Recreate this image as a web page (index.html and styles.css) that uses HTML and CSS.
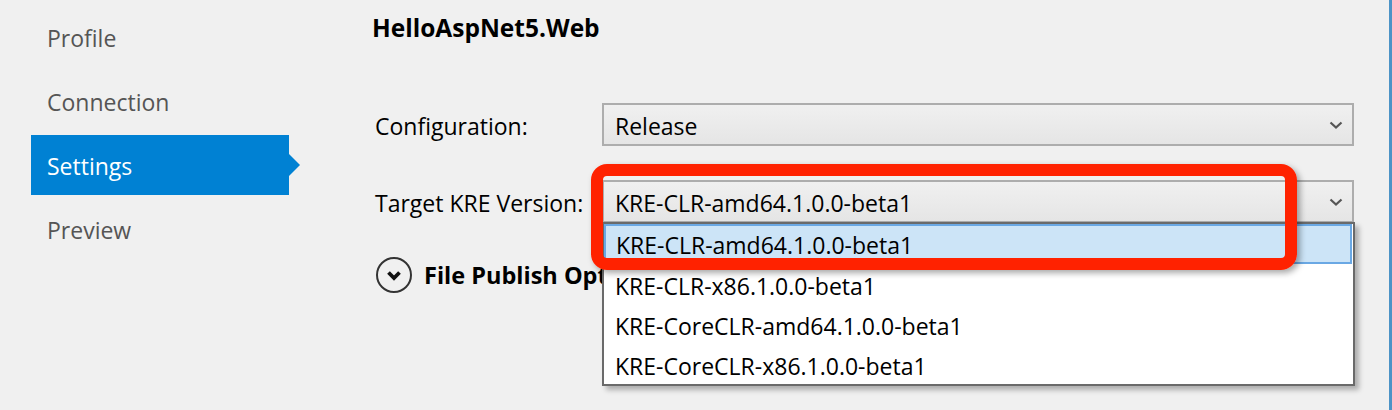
FILE: index.html
```html
<!DOCTYPE html>
<html>
<head>
<meta charset="utf-8">
<link rel="stylesheet" href="styles.css">
</head>
<body>
<div class="page">
  <nav class="sidebar">
    <div class="nav-item">Profile</div>
    <div class="nav-item">Connection</div>
    <div class="nav-item active">Settings</div>
    <div class="nav-item">Preview</div>
  </nav>
  <main class="main">
    <h1 class="title">HelloAspNet5.Web</h1>
    <div class="form">
      <label class="label">Configuration:</label>
      <div class="combo">
        <span>Release</span>
        <svg class="chev" width="14" height="8" viewBox="0 0 14 8"><polyline points="1.5,1.5 7,6.5 12.5,1.5" fill="none" stroke="#555" stroke-width="2.2"/></svg>
      </div>
      <label class="label">Target KRE Version:</label>
      <div class="combo-wrap">
        <div class="combo">
          <span>KRE-CLR-amd64.1.0.0-beta1</span>
          <svg class="chev" width="14" height="8" viewBox="0 0 14 8"><polyline points="1.5,1.5 7,6.5 12.5,1.5" fill="none" stroke="#555" stroke-width="2.2"/></svg>
        </div>
        <ul class="dropdown">
          <li class="opt selected">KRE-CLR-amd64.1.0.0-beta1</li>
          <li class="opt">KRE-CLR-x86.1.0.0-beta1</li>
          <li class="opt">KRE-CoreCLR-amd64.1.0.0-beta1</li>
          <li class="opt">KRE-CoreCLR-x86.1.0.0-beta1</li>
        </ul>
        <div class="callout"></div>
      </div>
    </div>
    <div class="expander">
      <svg class="exp-icon" width="38" height="38" viewBox="0 0 38 38"><circle cx="19" cy="19" r="17" fill="none" stroke="#333" stroke-width="2"/><polyline points="13.5,16.5 19,22 24.5,16.5" fill="none" stroke="#111" stroke-width="3.8"/></svg>
      <span class="exp-text">File Publish Options</span>
    </div>
  </main>
</div>
</body>
</html>
```

FILE: styles.css
```css
* { box-sizing: border-box; }
html, body { margin: 0; padding: 0; }
body {
  background: #f0f0f0;
  font-family: "Open Sans", "Noto Sans", sans-serif;
  width: 1392px;
  height: 410px;
  overflow: hidden;
}
.page {
  display: flex;
  width: 1392px;
  height: 410px;
  border-right: 3px solid #4c93c6;
}
.sidebar {
  width: 341px;
  padding-top: 7px;
  padding-left: 31px;
  display: flex;
  flex-direction: column;
  gap: 4px;
}
.nav-item {
  position: relative;
  width: 258px;
  height: 60px;
  display: flex;
  align-items: center;
  padding-left: 16px;
  padding-top: 2px;
  font-size: 23px;
  color: #555;
}
.nav-item.active {
  background: #0081d3;
  color: #fff;
}
.nav-item.active::after {
  content: "";
  position: absolute;
  right: -11px;
  top: 19px;
  border-left: 11px solid #0081d3;
  border-top: 11px solid transparent;
  border-bottom: 11px solid transparent;
}
.main {
  flex: 1;
  padding-left: 31px;
}
.title {
  margin: 0;
  padding-top: 11px;
  font-size: 24.5px;
  font-weight: 700;
  color: #000;
  line-height: 34px;
}
.form {
  margin-top: 58px;
  display: grid;
  grid-template-columns: 227px 752px;
  row-gap: 34px;
  padding-left: 3px;
}
.label {
  display: flex;
  align-items: center;
  padding-top: 2px;
  font-size: 23px;
  color: #000;
}
.combo-wrap { position: relative; }
.combo {
  height: 43px;
  border: 2px solid #adadad;
  background: linear-gradient(#f0f0f0, #e5e5e5);
  display: flex;
  align-items: center;
  justify-content: space-between;
  padding: 2px 9px 0 11px;
  font-size: 23px;
  color: #000;
}
.chev { display: block; margin-top: -2px; }
.dropdown {
  position: absolute;
  left: 0;
  top: 42px;
  width: 753px;
  margin: 0;
  padding: 0;
  list-style: none;
  background: #fff;
  border: 2px solid #6a6a6a;
  box-shadow: 4px 4px 5px rgba(0,0,0,0.28);
  z-index: 2;
}
.opt {
  height: 40px;
  display: flex;
  align-items: center;
  padding-left: 11px;
  padding-top: 3px;
  font-size: 23px;
  color: #000;
}
.opt.selected {
  background: #cce4f7;
  border: 2px solid #6aa8e4;
  padding-left: 10px;
  padding-top: 1px;
  margin-right: 1px;
}
.callout {
  position: absolute;
  left: -11px;
  top: -16px;
  width: 706px;
  height: 106px;
  border: 12px solid #ff2200;
  border-radius: 16px;
  box-shadow: 3px 3px 6px rgba(0,0,0,0.35);
  z-index: 3;
}
.expander {
  margin-top: 33px;
  display: flex;
  align-items: center;
  gap: 11px;
  padding-left: 3px;
}
.exp-icon { display: block; flex: none; }
.exp-text {
  white-space: nowrap;
  font-size: 23.5px;
  font-weight: 700;
  color: #000;
}
```
